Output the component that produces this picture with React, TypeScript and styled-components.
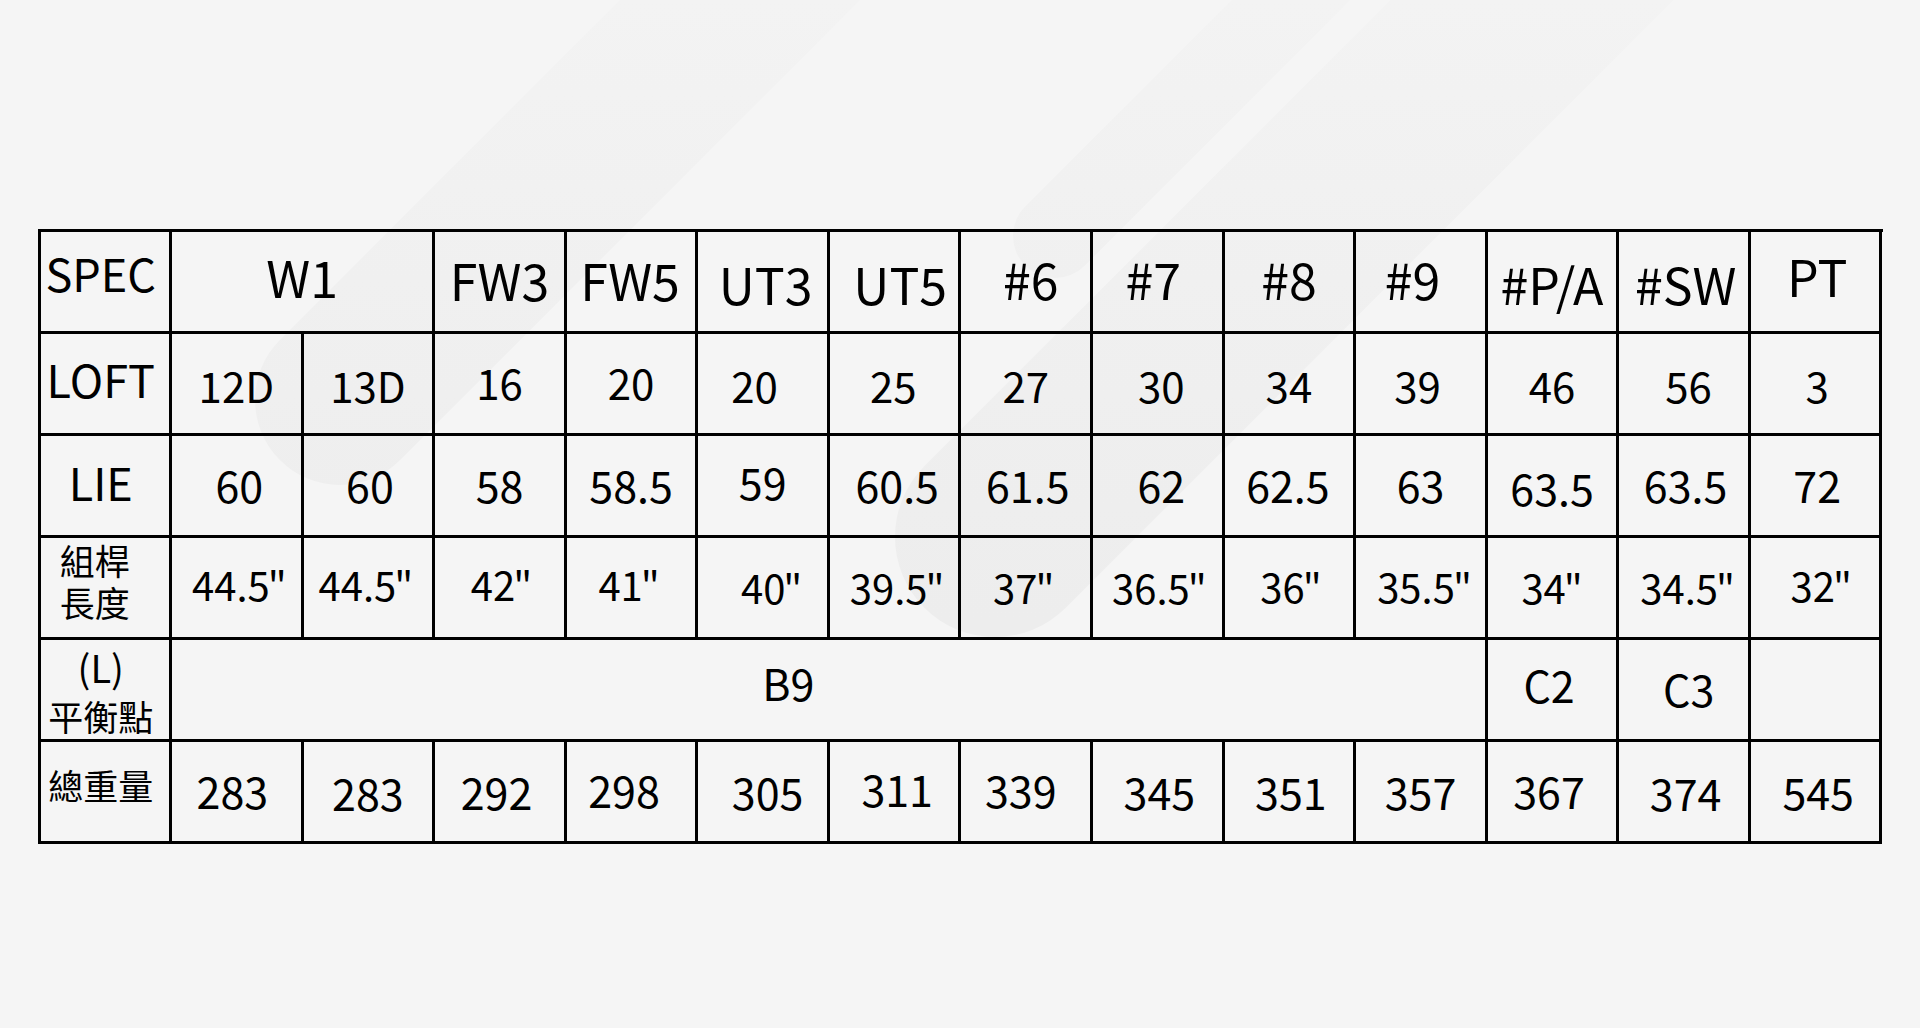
import styled, { createGlobalStyle } from 'styled-components';

const GlobalStyle = createGlobalStyle`
    html, body {
        margin: 0;
        padding: 0;
        background: #f5f5f5;
    }
`;

const Page = styled.div`
    position: relative;
    width: 1920px;
    height: 1028px;
    overflow: hidden;
    background: #f5f5f5;
    font-family: "Noto Sans CJK TC", "Noto Sans", sans-serif;
    color: #000;
`;

const Backdrop = styled.svg`
    position: absolute;
    left: 0;
    top: 0;
    width: 1920px;
    height: 1028px;
`;

const Content = styled.div`
    position: relative;
    display: flex;
    justify-content: center;
    padding-top: 229px;
`;

const SpecGrid = styled.div`
    display: grid;
    grid-template-columns: repeat(14, 1fr);
    grid-auto-rows: 102px;
    width: 1845px;
    box-sizing: border-box;
    border-top: 3px solid #000;
    border-left: 3px solid #000;
`;

type CellProps = { $span?: number; $size: number; $dx?: number; $dy?: number };

const Cell = styled.div<CellProps>`
    grid-column: span ${p => p.$span ?? 1};
    box-sizing: border-box;
    border-right: 3px solid #000;
    border-bottom: 3px solid #000;
    display: flex;
    flex-direction: column;
    align-items: center;
    justify-content: center;
    font-size: ${p => p.$size}px;
    line-height: 1;
    white-space: nowrap;
    padding-left: ${p => Math.max(0, 2 * (p.$dx ?? 0))}px;
    padding-right: ${p => Math.max(0, -2 * (p.$dx ?? 0))}px;
    padding-top: ${p => Math.max(0, 2 * (p.$dy ?? 0))}px;
    padding-bottom: ${p => Math.max(0, -2 * (p.$dy ?? 0))}px;
`;

const LabelLine = styled.span<{ $size?: number; $gap?: number }>`
    display: block;
    font-size: ${p => p.$size ?? 35}px;
    margin-top: ${p => p.$gap ?? 0}px;
`;

const Inch = styled.span`
    margin-left: -2px;
`;

type Item = { t: string; dx?: number; dy?: number; span?: number; size?: number };

const header: Item[] = [
    { t: 'SPEC', dx: -4, dy: -4, size: 45 },
    { t: 'W1', span: 2, dx: 0, dy: -1 },
    { t: 'FW3', dx: 0, dy: 2 },
    { t: 'FW5', dx: -1, dy: 2 },
    { t: 'UT3', dx: 3, dy: 6 },
    { t: 'UT5', dx: 6, dy: 6 },
    { t: '#6', dx: 5, dy: 1 },
    { t: '#7', dx: -4, dy: 1 },
    { t: '#8', dx: 0, dy: 1 },
    { t: '#9', dx: -8, dy: 1 },
    { t: '#P/A', dx: 0, dy: 6 },
    { t: '#SW', dx: 2, dy: 6 },
    { t: 'PT', dx: 2, dy: -2 },
];

const loft: Item[] = [
    { t: 'LOFT', dx: -4, dy: -3, size: 45 },
    { t: '12D', dy: 4 },
    { t: '13D', dy: 4 },
    { t: '16', dy: 1 },
    { t: '20', dy: 1 },
    { t: '20', dx: -8, dy: 4 },
    { t: '25', dx: -1, dy: 4 },
    { t: '27', dy: 4 },
    { t: '30', dx: 4, dy: 4 },
    { t: '34', dy: 4 },
    { t: '39', dx: -3, dy: 4 },
    { t: '46', dy: 4 },
    { t: '56', dx: 5, dy: 4 },
    { t: '3', dx: 2, dy: 4 },
];

const lie: Item[] = [
    { t: 'LIE', dx: -4, dy: -1, size: 45 },
    { t: '60', dx: 3, dy: 2 },
    { t: '60', dx: 2, dy: 2 },
    { t: '58', dy: 2 },
    { t: '58.5', dy: 2 },
    { t: '59', dy: -1 },
    { t: '60.5', dx: 3, dy: 2 },
    { t: '61.5', dx: 2, dy: 2 },
    { t: '62', dx: 4, dy: 2 },
    { t: '62.5', dx: -1, dy: 2 },
    { t: '63', dy: 2 },
    { t: '63.5', dy: 5 },
    { t: '63.5', dx: 2, dy: 2 },
    { t: '72', dx: 2, dy: 2 },
];

const lengths: Item[] = [
    { t: '44.5', dx: 3, dy: -1 },
    { t: '44.5', dx: -2, dy: -1 },
    { t: '42', dx: 2, dy: -1 },
    { t: '41', dx: -2, dy: -1 },
    { t: '40', dx: 9, dy: 2 },
    { t: '39.5', dx: 3, dy: 2 },
    { t: '37', dx: -2, dy: 2 },
    { t: '36.5', dx: 2, dy: 2 },
    { t: '36', dx: 2, dy: 1 },
    { t: '35.5', dx: 4, dy: 1 },
    { t: '34', dy: 2 },
    { t: '34.5', dx: 4, dy: 2 },
    { t: '32', dx: 6, dy: 0 },
];

const balance: Item[] = [
    { t: 'B9', span: 10, dx: -40, dy: -4 },
    { t: 'C2', dx: -3, dy: -2 },
    { t: 'C3', dx: 5, dy: 2 },
    { t: '' },
];

const weights: Item[] = [
    { t: '總重量', dx: -4, dy: -4, size: 35 },
    { t: '283', dx: -4, dy: 2 },
    { t: '283', dy: 4 },
    { t: '292', dx: -3, dy: 3 },
    { t: '298', dx: -7, dy: 1 },
    { t: '305', dx: 5, dy: 3 },
    { t: '311', dx: 3, dy: 0 },
    { t: '339', dx: -5, dy: 1 },
    { t: '345', dx: 2, dy: 3 },
    { t: '351', dx: 2, dy: 3 },
    { t: '357', dy: 3 },
    { t: '367', dx: -3, dy: 2 },
    { t: '374', dx: 2, dy: 4 },
    { t: '545', dx: 3, dy: 3 },
];

function renderRow(items: Item[], size: number, base: number, key: string, inch = false) {
    return items.map((it, i) => (
        <Cell
            key={key + i}
            $span={it.span}
            $size={it.size ?? size}
            $dx={it.dx}
            $dy={(it.dy ?? 0) + base}
        >
            {inch ? <span>{it.t}<Inch>"</Inch></span> : it.t}
        </Cell>
    ));
}

export default function App() {
    return (
        <Page>
            <GlobalStyle />
            <Backdrop viewBox="0 0 1920 1028">
                <defs>
                    <linearGradient id="fade" gradientUnits="userSpaceOnUse" x1="0" y1="620" x2="0" y2="0">
                        <stop offset="0" stopColor="#ededed" />
                        <stop offset="0.55" stopColor="#f0f0f0" />
                        <stop offset="1" stopColor="#f3f3f3" />
                    </linearGradient>
                </defs>
                <g stroke="url(#fade)" strokeLinecap="round" fill="none">
                    <line x1="340" y1="400" x2="900" y2="-160" strokeWidth="170" />
                    <line x1="1055" y1="236" x2="1400" y2="-109" strokeWidth="84" />
                    <line x1="995" y1="537" x2="1700" y2="-168" strokeWidth="200" />
                </g>
            </Backdrop>
            <Content>
                <SpecGrid>
                    {renderRow(header, 50, -5, 'h')}
                    {renderRow(loft, 42, -2.5, 'l')}
                    {renderRow(lie, 43, -3.5, 'e')}
                    <Cell $size={35} $dx={-10} $dy={-7}>
                        <LabelLine>組桿</LabelLine>
                        <LabelLine $gap={7}>長度</LabelLine>
                    </Cell>
                    {renderRow(lengths, 40, -3, 'g', true)}
                    <Cell $size={35} $dx={-4} $dy={0.5}>
                        <LabelLine $size={38}>(L)</LabelLine>
                        <LabelLine $gap={12}>平衡點</LabelLine>
                    </Cell>
                    {renderRow(balance, 43, -3.5, 'b')}
                    {renderRow(weights, 43, -3.5, 'w')}
                </SpecGrid>
            </Content>
        </Page>
    );
}
